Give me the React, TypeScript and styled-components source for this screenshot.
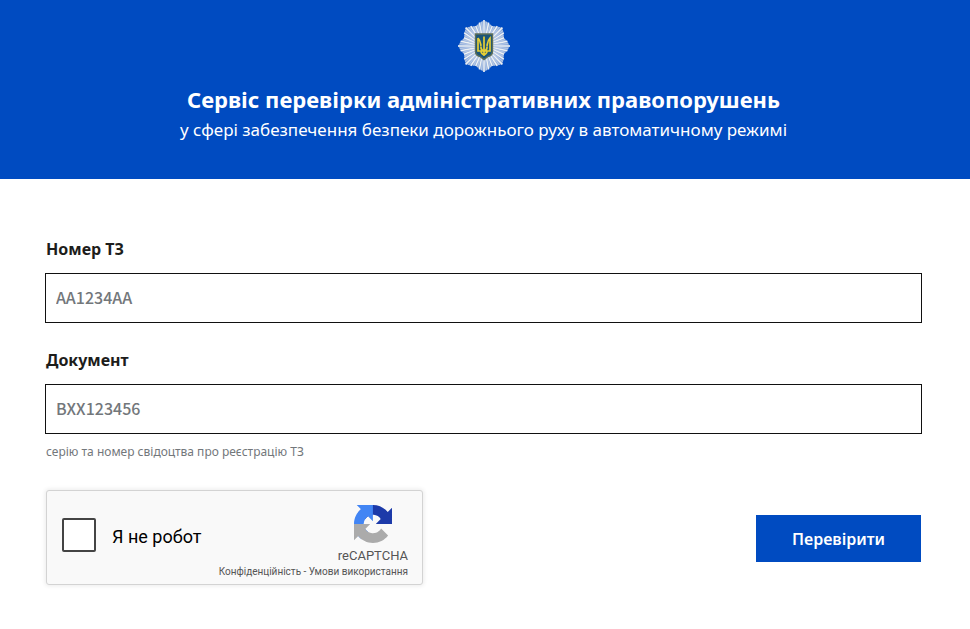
import React from "react";
import styled, { createGlobalStyle } from "styled-components";

const GlobalStyle = createGlobalStyle`
  *, *::before, *::after { box-sizing: border-box; }
  body {
    margin: 0;
    background: #fff;
    color: #1d1d1b;
    font-family: "Noto Sans", "Open Sans", sans-serif;
    font-size: 16px;
    line-height: 24px;
  }
`;

const Header = styled.header`
  display: flex;
  flex-direction: column;
  align-items: center;
  padding: 19px 48px 35px 45px;
  background: #004bc1;
  color: #fff;
  text-align: center;
`;

const Emblem = styled.svg`
  width: 54px;
  height: 54px;
  margin-bottom: 11px;
`;

const Title = styled.h1`
  margin: 0;
  padding-bottom: 2px;
  font-size: 22px;
  line-height: 30px;
  font-weight: 700;
`;

const Subtitle = styled.p`
  margin: 0;
  font-size: 17px;
  line-height: 28px;
`;

const Form = styled.form`
  display: flex;
  flex-direction: column;
  padding: 58px 48px 44px 45px;
`;

const Field = styled.div`
  display: flex;
  flex-direction: column;
  margin-bottom: 25px;
`;

const Label = styled.label`
  margin-bottom: 12px;
  padding-left: 1px;
  font-size: 16px;
  font-weight: 700;
`;

const TextInput = styled.input`
  width: 100%;
  height: 50px;
  padding: 0 10px 2px;
  border: 1px solid #111;
  border-radius: 0;
  background: #fff;
  color: #1d1d1b;
  font-family: "Noto Sans CJK SC", "Noto Sans", sans-serif;
  font-size: 16px;
  font-weight: 500;

  &::placeholder {
    color: #73777b;
    opacity: 1;
  }
`;

const Hint = styled.small`
  padding: 6px 0 1px 1px;
  color: #73777b;
  font-size: 12px;
  line-height: 24px;
`;

const Actions = styled.div`
  display: flex;
  align-items: center;
  justify-content: space-between;
`;

const Captcha = styled.div`
  display: flex;
  justify-content: space-between;
  width: 377px;
  height: 95px;
  margin-left: 1px;
  padding: 0 14px 0 15px;
  border: 1px solid #d3d3d3;
  border-radius: 3px;
  background: #f9f9f9;
  box-shadow: 0 0 4px 1px rgba(0, 0, 0, 0.08);
  font-family: Roboto, sans-serif;
`;

const CheckLabel = styled.label`
  display: flex;
  align-items: center;
  gap: 16px;
  padding-bottom: 5px;
  color: #000;
  font-size: 18px;
  line-height: 24px;
  white-space: nowrap;
`;

const CheckText = styled.span`
  padding-top: 4px;
`;

const CheckBox = styled.input`
  appearance: none;
  width: 34px;
  height: 34px;
  margin: 0;
  border: 2px solid #444;
  border-radius: 2px;
  background: #fff;

  &:checked {
    background: #4285f4;
  }
`;

const Brand = styled.div`
  display: flex;
  flex-direction: column;
  align-items: flex-end;
  margin-left: -40px;
  padding-top: 14px;
  color: #555;
`;

const BrandMark = styled.div`
  display: flex;
  flex-direction: column;
  align-items: center;
  font-size: 13px;
  line-height: 20px;
`;

const BrandLogo = styled.svg`
  width: 38px;
  height: 38px;
  margin-bottom: 3px;
`;

const Legal = styled.div`
  font-size: 10px;
  line-height: 12px;
  white-space: nowrap;
`;

const LegalLink = styled.a`
  color: inherit;
  text-decoration: none;
`;

const Submit = styled.button`
  width: 165px;
  height: 47px;
  margin: 1px 1px 0 0;
  padding: 2px 0 0;
  border: 0;
  background: #004bc1;
  color: #fff;
  font-family: inherit;
  font-size: 16px;
  font-weight: 600;
`;

const rays = Array.from({ length: 64 }, (_, i) => {
  const angle = (i * Math.PI) / 32;
  const step = i % 8;
  const distance = Math.min(step, 8 - step);
  const radius = 26 - distance * 1.1 - (i % 2) * 0.5;
  return {
    x: 27 + radius * Math.sin(angle),
    y: 27 - radius * Math.cos(angle),
  };
});

const burst = rays.map((ray) => `${ray.x},${ray.y}`).join(" ");

function PoliceEmblem() {
  return (
    <Emblem viewBox="0 0 54 54" aria-hidden="true">
      <polygon points={burst} fill="#7ea0d8" />
      {rays.map((ray, i) => (
        <line
          key={i}
          x1="27"
          y1="27"
          x2={ray.x}
          y2={ray.y}
          stroke={i % 2 ? "#b3c6e4" : "#eef1f3"}
          strokeWidth="1.5"
        />
      ))}
      <path
        d="M18.500 15h17v17.500c0 3-2 4.500-4.500 5l-4 3-4-3c-2.500-.5-4.500-2-4.500-5z"
        fill="#1b5578"
        stroke="#5d6f59"
        strokeWidth="1.4"
      />
      <path
        d="M21 19v13h12V19c-2.500 2.500-2.500 5-3 8M21 19c2.500 2.500 2.500 5 3 8M27 17.500V37M24 27.500c-.4 3 1 4 3 5 2-1 3.400-2 3-5M24 32c0 2 1 3 3 4 2-1 3-2 3-4"
        fill="none"
        stroke="#e4ce35"
        strokeWidth="1.700"
      />
    </Emblem>
  );
}

function CaptchaLogo() {
  return (
    <BrandLogo viewBox="0 0 64 64" aria-hidden="true">
      <path
        fill="#1c3aa9"
        d="M64 31.955l-.033-1.370V4.687l-7.160 7.160C50.948 4.674 42.033.093 32.050.093c-10.400 0-19.622 4.960-25.458 12.640l11.736 11.860a15.550 15.550 0 0 1 4.754-5.334c2.050-1.600 4.952-2.906 8.968-2.906.485 0 .860.057 1.135.163 4.976.393 9.288 3.140 11.828 7.124l-8.307 8.307L64 31.953"
      />
      <path
        fill="#4285f4"
        d="M31.862.094l-1.370.033H4.594l7.160 7.160C4.580 13.147 0 22.060 0 32.046c0 10.400 4.960 19.622 12.640 25.458L24.500 45.768a15.550 15.550 0 0 1-5.334-4.754c-1.600-2.050-2.906-4.952-2.906-8.968 0-.485.057-.860.163-1.135.393-4.976 3.140-9.288 7.124-11.828l8.307 8.307L31.860.095"
      />
      <path
        fill="#ababab"
        d="M.001 32.045l.033 1.370v25.898l7.160-7.160c5.860 7.173 14.774 11.754 24.760 11.754 10.400 0 19.622-4.960 25.458-12.640l-11.736-11.860a15.550 15.550 0 0 1-4.754 5.334c-2.050 1.600-4.952 2.906-8.968 2.906-.485 0-.860-.057-1.135-.163-4.976-.393-9.288-3.140-11.828-7.124l8.307-8.307c-10.522.040-22.400.066-27.295-.005"
      />
    </BrandLogo>
  );
}

export default function App() {
  return (
    <>
      <GlobalStyle />
      <Header>
        <PoliceEmblem />
        <Title>Сервіс перевірки адміністративних правопорушень</Title>
        <Subtitle>
          у сфері забезпечення безпеки дорожнього руху в автоматичному режимі
        </Subtitle>
      </Header>
      <main>
        <Form onSubmit={(event: React.FormEvent) => event.preventDefault()}>
          <Field>
            <Label htmlFor="plate">Номер ТЗ</Label>
            <TextInput id="plate" type="text" placeholder="AA1234AA" />
          </Field>
          <Field>
            <Label htmlFor="document">Документ</Label>
            <TextInput
              id="document"
              type="text"
              placeholder="BXX123456"
              aria-describedby="document-hint"
            />
            <Hint id="document-hint">
              серію та номер свідоцтва про реєстрацію ТЗ
            </Hint>
          </Field>
          <Actions>
            <Captcha>
              <CheckLabel htmlFor="robot">
                <CheckBox id="robot" type="checkbox" />
                <CheckText>Я не робот</CheckText>
              </CheckLabel>
              <Brand>
                <BrandMark>
                  <CaptchaLogo />
                  reCAPTCHA
                </BrandMark>
                <Legal>
                  <LegalLink href="#privacy">Конфіденційність</LegalLink>
                  {" - "}
                  <LegalLink href="#terms">Умови використання</LegalLink>
                </Legal>
              </Brand>
            </Captcha>
            <Submit type="submit">Перевірити</Submit>
          </Actions>
        </Form>
      </main>
    </>
  );
}
